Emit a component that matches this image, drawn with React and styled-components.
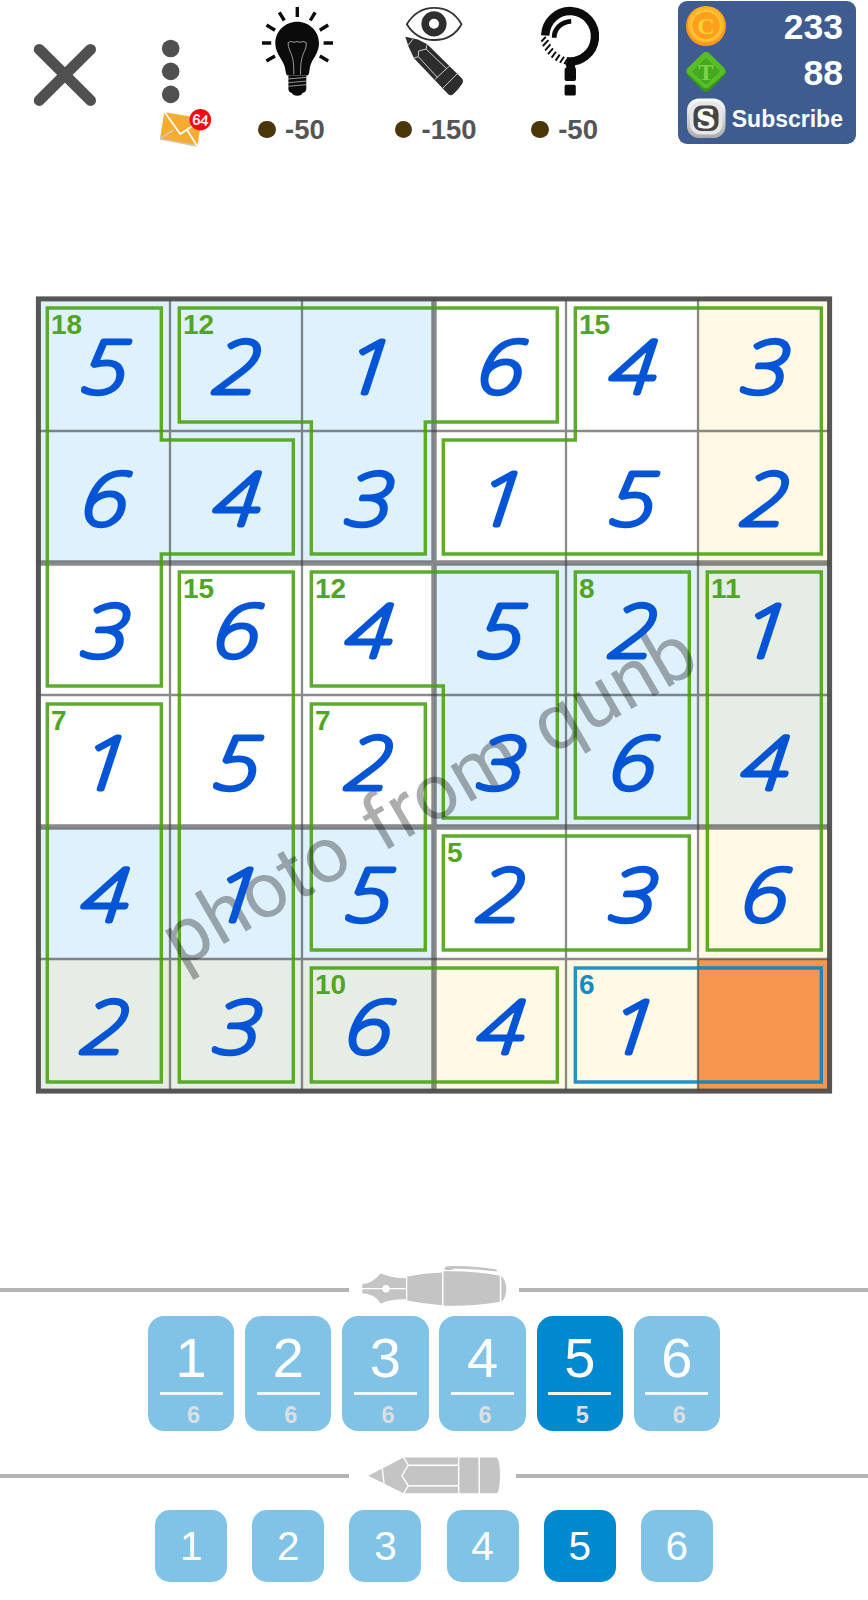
import React from 'react';
import styled, { createGlobalStyle } from 'styled-components';

const GlobalStyle = createGlobalStyle`
  * { box-sizing: border-box; }
  body { margin: 0; background: #fff; font-family: "Liberation Sans", Arial, sans-serif; }
  svg { display: block; flex: none; overflow: visible; }
  button { border: 0; padding: 0; background: none; font: inherit; }
`;

const Screen = styled.main`
  display: flex;
  flex-direction: column;
  width: 868px;
  height: 1600px;
  overflow: hidden;
`;

const Header = styled.header`
  display: flex;
  align-items: flex-start;
  height: 160px;
  padding-left: 33px;
`;

const CloseButton = styled.button`
  width: 64px;
  margin-top: 43px;
`;

const Menu = styled.div`
  display: flex;
  flex-direction: column;
  width: 58px;
  margin: 38.5px 44px 0 59px;
`;

const Hints = styled.div`
  display: grid;
  grid-template-columns: repeat(3, 136.6px);
`;

const Hint = styled.div`
  display: flex;
  flex-direction: column;
`;

const Cost = styled.div`
  display: flex;
  align-items: center;
  gap: 9.5px;
  height: 30px;
  margin-top: 14.5px;
  color: #555;
  font-size: 27.5px;
  font-weight: bold;
  line-height: 30px;
`;

const Coin = styled.span`
  width: 17.5px;
  height: 17.5px;
  border-radius: 50%;
  background: #4b360a;
`;

const Wallet = styled.section`
  display: grid;
  grid-template-rows: repeat(3, 46px);
  width: 178.5px;
  height: 143px;
  margin: 1px 0 0 10.2px;
  padding: 2px 13.5px 0 8px;
  border-radius: 9px;
  background: #3f5c91;
  color: #fff;
  font-weight: bold;
`;

const WalletRow = styled.div`
  display: flex;
  align-items: center;
  justify-content: space-between;
  font-size: ${(p) => (p.$small ? '23px' : '35.5px')};
`;

const Amount = styled.span`
  padding-top: 2px;
`;

const Board = styled.section`
  position: relative;
  display: grid;
  grid-template: repeat(6, 132px) / repeat(6, 132px);
  width: 792px;
  margin: 139px 0 171px 38px;
`;

const tones = {
  w: '#ffffff',
  b: '#dff1fc',
  y: '#fff9e5',
  g: '#e6ede4',
  o: '#f8964f',
};

const Cell = styled.div`
  position: relative;
  background: ${(p) => tones[p.$tone]};
`;

const DigitLayer = styled.svg`
  position: relative;
  z-index: 2;

  text {
    fill: #0455d6;
    stroke: #0455d6;
    stroke-width: 5px;
    stroke-linejoin: round;
    font: italic 100 72.8px "Noto Sans", sans-serif;
    text-anchor: middle;
  }
`;

const Digit = ({ value }) => (
  <DigitLayer width="132" height="132" viewBox="0 0 132 132">
    <text transform="translate(65.2 93.6) skewX(-5) scale(1.14 1)">{value}</text>
  </DigitLayer>
);

const Sum = styled.span`
  position: absolute;
  z-index: 2;
  top: 11px;
  left: 13px;
  color: ${(p) => (p.$active ? '#168ac4' : '#52a61f')};
  font-size: 28px;
  font-weight: bold;
  line-height: 30px;
`;

const Marks = styled.svg`
  position: absolute;
  inset: 0;
`;

const Divider = styled.div`
  display: flex;
  align-items: flex-start;
  height: ${(p) => p.$height}px;
`;

const Rule = styled.span`
  flex: ${(p) => (p.$width ? `0 0 ${p.$width}px` : '1')};
  height: 4px;
  margin-top: ${(p) => p.$top}px;
  margin-left: ${(p) => p.$left || 0}px;
  margin-right: ${(p) => p.$right || 0}px;
  background: #b4b4b4;
`;

const Pad = styled.div`
  display: flex;
  justify-content: center;
  gap: ${(p) => p.$gap}px;
  margin: ${(p) => p.$margin};
`;

const PenKey = styled.button`
  display: flex;
  flex-direction: column;
  align-items: center;
  width: 86.4px;
  height: 115px;
  border-radius: 16px;
  background: ${(p) => (p.$active ? '#0089cf' : '#80c3e6')};
  color: #fff;
`;

const KeyNumber = styled.span`
  height: 75.5px;
  padding-top: 11px;
  font-size: 56px;
  line-height: 62px;
`;

const KeyRule = styled.span`
  width: 63px;
  height: 3.4px;
  background: #f4f8fb;
`;

const KeyCount = styled.span`
  padding: 6.5px 0 0 5px;
  color: #dadfe4;
  font-size: 23.5px;
  font-weight: bold;
  line-height: 28px;
`;

const PencilKey = styled.button`
  width: 72px;
  height: 72px;
  border-radius: 15px;
  background: ${(p) => (p.$active ? '#0089cf' : '#80c3e6')};
  color: #fff;
  font-size: 40.5px;
  line-height: 73px;
  text-align: center;
`;

const values = ['521643', '643152', '364521', '152364', '415236', '23641 '];
const shading = ['bbbwwy', 'bbbwwy', 'wwwbbg', 'wwwbbg', 'bbbwwy', 'gggyyo'];
const sums = {
  '0-0': 18, '0-1': 12, '0-4': 15, '2-1': 15, '2-2': 12, '2-4': 8,
  '2-5': 11, '3-0': 7, '3-2': 7, '4-3': 5, '5-2': 10, '5-4': 6,
};

const cages = [
  'M9 9H123V141H255V255H123V387H9Z',
  'M141 9H519V123H387V255H273V123H141Z',
  'M537 9H783V255H405V141H537Z',
  'M141 273H255V783H141Z',
  'M273 273H519V519H405V387H273Z',
  'M537 273H651V519H537Z',
  'M669 273H783V651H669Z',
  'M9 405H123V783H9Z',
  'M273 405H387V651H273Z',
  'M405 537H651V651H405Z',
  'M273 669H519V783H273Z',
];

const BulbIcon = () => (
  <svg width="80" height="100" viewBox="0 0 80 100" fill="none">
    <path
      d="M39.3 7V17M21.3 12.3L26.3 20.5M57.2 12.3L52.3 20.5M8.5 25L17 30.2M70.2 25L61.8 30.2M4 43H13.2M65.6 43H75M8.4 61L17 56M70.2 61L61.8 56"
      stroke="#0b0b0b" strokeWidth="3.4"
    />
    <path
      d="M39.2 21.7C51.3 21.7 61 31.2 61 43.3C61 51 56.5 57 53.5 62.5C51.5 66.5 51.8 70 51 73.5Q50.3 75.7 48 75.7H31Q28.5 75.7 28 73.5C27.2 70 27.3 66.5 25 62.5C22 57 17.3 51 17.3 43.3C17.3 31.2 27 21.7 39.2 21.7Z"
      fill="#0b0b0b"
    />
    <path d="M30.4 76H48.3V89Q48 92.3 44.5 93Q43.8 95.7 39.3 95.7Q35 95.7 34 93Q30.7 92.3 30.4 89Z" fill="#0b0b0b" />
    <path d="M30 79L49 77.3M30 82.7L49 81M30 86.3L49 84.6" stroke="#bbb" strokeWidth="0.8" />
    <path
      d="M35.8 74.5C36 61 34.5 56 31.5 50Q29.8 46 30.2 42.5L33 41.5L36 42.3L39 41.5L42 42.3L45 41.5L48.3 42.5Q48.7 46 47 50C44 56 42.5 61 42.5 74.5"
      stroke="#999" strokeWidth="1"
    />
  </svg>
);

const RevealIcon = () => (
  <svg width="80" height="100" viewBox="0 0 80 100" fill="none">
    <path d="M11.8 24.2C19 12.5 28 7.8 39.2 7.8S60 12.5 66.5 24.2C60 35.8 50 40 39.2 40S19 35.8 11.8 24.2Z" stroke="#333" strokeWidth="1.8" />
    <circle cx="39" cy="23.8" r="8.8" stroke="#2f2f2f" strokeWidth="7.6" />
    <path
      d="M10.3 36.7L23 39.5L32.3 44.3L66 77.5Q69.5 80.5 67 84Q63.5 89.5 58.5 94Q55.5 96.5 53 94L19 58.3L13.5 46.5Z"
      fill="#2d2d2d"
    />
    <path
      d="M13.2 45.3L18 39M18.3 58.3L23.3 56.7L23.5 51L31 49L32.3 43.8M23.3 56.7L42.5 77.5M31 49L52 69M40 79.3L55.5 65M47.5 88.5L62.5 73.5"
      stroke="#ccc" strokeWidth="1"
    />
  </svg>
);

const MagnifierIcon = () => (
  <svg width="80" height="100" viewBox="0 0 80 100" fill="none">
    <path d="M14.2 35.5A24.9 25.2 0 1 1 35.5 61.2" stroke="#0b0b0b" strokeWidth="8.4" />
    <path
      d="M10.4 41.5L14.8 36.8M11.8 46L17.4 40.2M14.2 50.4L19.4 44.4M17 54.2L22 48.4M20.6 57.6L25 51.8M24.6 60.6L28.7 54.6M29 62.8L33 56.8M33.2 64L36.4 59"
      stroke="#0b0b0b" strokeWidth="1.9"
    />
    <path d="M23.2 37.7C23 29 30.5 21.5 40.2 21.3" stroke="#0b0b0b" strokeWidth="4.8" />
    <path d="M34 63H44V67L45 69V79.3Q45 81 43 81H35.5Q33.6 81 33.6 79.3V69L35.5 67Z" fill="#0b0b0b" />
    <rect x="33.6" y="84.8" width="11.2" height="10.8" rx="1.6" fill="#0b0b0b" />
  </svg>
);

const CoinIcon = () => (
  <svg width="40" height="40" viewBox="0 0 40 40">
    <circle cx="20" cy="20" r="20" fill="#ff981d" />
    <circle cx="20" cy="18.6" r="18.2" fill="#ffb52c" />
    <circle cx="20" cy="19.5" r="14.5" fill="#ff9f20" stroke="#ffce37" strokeWidth="1.3" />
    <text x="20" y="28" textAnchor="middle" fontFamily="Liberation Serif, serif" fontWeight="bold" fontSize="24" fill="#ffd22f">C</text>
  </svg>
);

const GemIcon = () => (
  <svg width="40" height="40" viewBox="0 0 40 40">
    <path d="M16.5 2Q20 -1.5 23.5 2L38 16.5Q41.5 20 38 24L23.5 38.4Q20 41.5 16.5 38.4L2 24Q-1.5 20 2 16.5Z" fill="#36931b" />
    <path d="M16.5 1.5Q20 -2 23.5 1.5L38 15.8Q41 19 38 22L23.5 35Q20 38 16.5 35L2 22Q-1 19 2 15.8Z" fill="#56bd25" />
    <path d="M20 5L35 19.5L20 33.5L5 19.5Z" fill="#43a91e" stroke="#66c532" strokeWidth="0.8" />
    <text x="20" y="28" textAnchor="middle" fontFamily="Liberation Serif, serif" fontWeight="bold" fontSize="23" fill="#80d34a">T</text>
  </svg>
);

const SubscribeIcon = () => (
  <svg width="40" height="40" viewBox="0 0 40 40">
    <defs>
      <linearGradient id="silver" x1="0" y1="0" x2="0" y2="1">
        <stop offset="0" stopColor="#fdfdfd" />
        <stop offset="1" stopColor="#aaa" />
      </linearGradient>
    </defs>
    <rect x="1" y="0.5" width="38.5" height="39.5" rx="12" fill="url(#silver)" />
    <rect x="4" y="3.5" width="32.5" height="33" rx="10" fill="#e6e6e6" />
    <rect x="7.5" y="7.5" width="25" height="25.5" rx="8" fill="#454545" />
    <text x="20" y="29.8" textAnchor="middle" fontFamily="DejaVu Serif, serif" fontWeight="bold" fontSize="26" fill="#fff" stroke="#fff" strokeWidth="0.9">S</text>
  </svg>
);

const PenIcon = () => (
  <svg width="148" height="48" viewBox="0 0 148 48">
    <g fill="#c4c4c4">
      <path d="M2.3 22L7 21.2C13 20 16 16 20.7 11.5Q32 16 46 16.3V37.4Q32 37 20.7 41.5C17 36 13 33 7 32L2.3 31.3Z" />
      <path d="M47.3 14.4Q64 11 82 10.6V43.2Q64 42 47.3 38.5Z" />
      <path d="M83.5 9.3Q115 8.5 139.8 13.8V39.8Q115 44.5 83.5 43.7Z" />
      <path d="M141.3 14Q146.2 18 146.2 27Q146.2 36 141.3 39.8Z" />
      <path d="M84.6 7.8V5.5Q86 4 90 4Q115 3.4 136.8 7.5V9.6Q115 6.5 94 6.7Q92 8 90 8Z" />
    </g>
    <path d="M2 26.7H46" stroke="#fff" strokeWidth="1.3" />
    <circle cx="26" cy="26.7" r="3.7" fill="#fff" />
  </svg>
);

const PencilIcon = () => (
  <svg width="136" height="40" viewBox="0 0 136 40">
    <path d="M2.3 19.7L37.5 1.6H131Q134 5.5 134 19.5Q134 34 131 37.2H37.5Z" fill="#c4c4c4" />
    <path
      d="M16.2 12L18 27.5M37.3 1L42.3 9L35.9 19.7L42.3 29.8L37.3 38M42.3 9.2H92.5M42.3 29.8H92.5M92.7 1V38M113.2 1V38"
      fill="none" stroke="#fff" strokeWidth="1.4"
    />
  </svg>
);

const hints = [
  { icon: <BulbIcon />, cost: '-50' },
  { icon: <RevealIcon />, cost: '-150' },
  { icon: <MagnifierIcon />, cost: '-50' },
];

const keys = [1, 2, 3, 4, 5, 6];

export default function App() {
  return (
    <Screen>
      <GlobalStyle />
      <Header>
        <CloseButton aria-label="Close">
          <svg width="64" height="64" viewBox="0 0 64 64">
            <path d="M6.3 6.4L57.5 57.4M57.5 6.4L6.3 57.4" stroke="#505050" strokeWidth="11" strokeLinecap="round" />
          </svg>
        </CloseButton>
        <Menu>
          <svg width="58" height="65" viewBox="0 0 58 65" fill="#505050">
            <circle cx="14.7" cy="9.5" r="8.8" />
            <circle cx="14.7" cy="32.4" r="8.8" />
            <circle cx="14.7" cy="55.4" r="8.8" />
          </svg>
          <svg width="58" height="45" viewBox="0 0 58 45">
            <path d="M8.3 8.3L45.7 14.3L41.3 42.7L4 34.8Z" fill="#f6ab31" />
            <path d="M4 34.5L17.5 25.8M4 35L41 42" fill="none" stroke="#d0c8c0" strokeWidth="1.5" />
            <path d="M8.6 8L24.3 30L45 16.5M30.8 25.5L41.5 42.5" fill="none" stroke="#fff" strokeWidth="1.7" />
            <circle cx="44.3" cy="15.7" r="10.8" fill="#f30a12" />
            <text x="44.4" y="21" textAnchor="middle" fontSize="14.5" fill="#fff" stroke="#fff" strokeWidth="0.4" transform="rotate(5 44.3 15.7)">64</text>
          </svg>
        </Menu>
        <Hints>
          {hints.map((hint, i) => (
            <Hint key={i}>
              {hint.icon}
              <Cost><Coin />{hint.cost}</Cost>
            </Hint>
          ))}
        </Hints>
        <Wallet>
          <WalletRow><CoinIcon /><Amount>233</Amount></WalletRow>
          <WalletRow><GemIcon /><Amount>88</Amount></WalletRow>
          <WalletRow $small><SubscribeIcon /><Amount>Subscribe</Amount></WalletRow>
        </Wallet>
      </Header>

      <Board>
        {values.flatMap((row, r) =>
          [...row].map((value, c) => {
            const id = `${r}-${c}`;
            return (
              <Cell key={id} $tone={shading[r][c]}>
                {sums[id] && <Sum $active={id === '5-4'}>{sums[id]}</Sum>}
                {value !== ' ' && <Digit value={value} />}
              </Cell>
            );
          })
        )}
        <Marks width="792" height="792" viewBox="0 0 792 792" fill="none">
          <g stroke="#3c3c3c" strokeOpacity="0.6">
            <path d="M132 0V792M264 0V792M528 0V792M660 0V792M0 132H792M0 396H792M0 660H792" strokeWidth="2.3" />
            <path d="M396 0V792M0 264H792M0 528H792" strokeWidth="5.4" />
          </g>
          <g transform="translate(0.3 0)" strokeWidth="3.4" strokeOpacity="0.88">
            {cages.map((d) => <path key={d} d={d} stroke="#45a010" />)}
            <path d="M537 669H783V783H537Z" stroke="#0583c0" />
          </g>
          <rect x="0.4" y="-0.1" width="791.2" height="792.2" stroke="#4d4d4d" strokeWidth="5" strokeOpacity="0.95" />
          <text
            transform="translate(143 670) rotate(-30)"
            fontFamily="Roboto, sans-serif" fontSize="78" letterSpacing="0.5" wordSpacing="8"
            fill="#000" fillOpacity="0.32"
          >photo from qunb</text>
        </Marks>
      </Board>

      <Divider $height={54}>
        <Rule $width={349} $top={26} $right={11} />
        <PenIcon />
        <Rule $top={26} $left={11} />
      </Divider>
      <Pad $gap={10.75} $margin="0 0 25px">
        {keys.map((n) => (
          <PenKey key={n} $active={n === 5}>
            <KeyNumber>{n}</KeyNumber>
            <KeyRule />
            <KeyCount>{n === 5 ? 5 : 6}</KeyCount>
          </PenKey>
        ))}
      </Pad>
      <Divider $height={54}>
        <Rule $width={349} $top={18} $right={17} />
        <PencilIcon />
        <Rule $top={18} $left={14} />
      </Divider>
      <Pad $gap={25.15} $margin="0">
        {keys.map((n) => (
          <PencilKey key={n} $active={n === 5}>{n}</PencilKey>
        ))}
      </Pad>
    </Screen>
  );
}
